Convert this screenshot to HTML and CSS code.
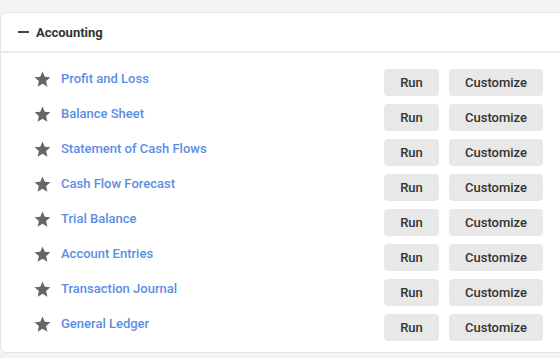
FILE: index.html
```html
<!DOCTYPE html>
<html lang="en">
<head>
    <meta charset="UTF-8">
    <meta name="viewport" content="width=device-width, initial-scale=1.0">
    <title>Reports - Accounting</title>
    <link rel="stylesheet" href="styles.css">
</head>
<body>
    <div class="panel">
        <div class="panel-header">
            <span class="collapse-icon"></span>
            <h2>Accounting</h2>
        </div>
        <ul class="report-list">
            <li class="report">
                <div class="report-name">
                    <svg class="star" viewBox="0 0 24 24"><path d="M12 17.27 18.18 21l-1.64-7.03L22 9.24l-7.19-.61L12 2 9.19 8.63 2 9.24l5.46 4.73L5.82 21z"/></svg>
                    <a href="#">Profit and Loss</a>
                </div>
                <div class="actions">
                    <button>Run</button>
                    <button class="wide">Customize</button>
                </div>
            </li>
            <li class="report">
                <div class="report-name">
                    <svg class="star" viewBox="0 0 24 24"><path d="M12 17.27 18.18 21l-1.64-7.03L22 9.24l-7.19-.61L12 2 9.19 8.63 2 9.24l5.46 4.73L5.82 21z"/></svg>
                    <a href="#">Balance Sheet</a>
                </div>
                <div class="actions">
                    <button>Run</button>
                    <button class="wide">Customize</button>
                </div>
            </li>
            <li class="report">
                <div class="report-name">
                    <svg class="star" viewBox="0 0 24 24"><path d="M12 17.27 18.18 21l-1.64-7.03L22 9.24l-7.19-.61L12 2 9.19 8.63 2 9.24l5.46 4.73L5.82 21z"/></svg>
                    <a href="#">Statement of Cash Flows</a>
                </div>
                <div class="actions">
                    <button>Run</button>
                    <button class="wide">Customize</button>
                </div>
            </li>
            <li class="report">
                <div class="report-name">
                    <svg class="star" viewBox="0 0 24 24"><path d="M12 17.27 18.18 21l-1.64-7.03L22 9.24l-7.19-.61L12 2 9.19 8.63 2 9.24l5.46 4.73L5.82 21z"/></svg>
                    <a href="#">Cash Flow Forecast</a>
                </div>
                <div class="actions">
                    <button>Run</button>
                    <button class="wide">Customize</button>
                </div>
            </li>
            <li class="report">
                <div class="report-name">
                    <svg class="star" viewBox="0 0 24 24"><path d="M12 17.27 18.18 21l-1.64-7.03L22 9.24l-7.19-.61L12 2 9.19 8.63 2 9.24l5.46 4.73L5.82 21z"/></svg>
                    <a href="#">Trial Balance</a>
                </div>
                <div class="actions">
                    <button>Run</button>
                    <button class="wide">Customize</button>
                </div>
            </li>
            <li class="report">
                <div class="report-name">
                    <svg class="star" viewBox="0 0 24 24"><path d="M12 17.27 18.18 21l-1.64-7.03L22 9.24l-7.19-.61L12 2 9.19 8.63 2 9.24l5.46 4.73L5.82 21z"/></svg>
                    <a href="#">Account Entries</a>
                </div>
                <div class="actions">
                    <button>Run</button>
                    <button class="wide">Customize</button>
                </div>
            </li>
            <li class="report">
                <div class="report-name">
                    <svg class="star" viewBox="0 0 24 24"><path d="M12 17.27 18.18 21l-1.64-7.03L22 9.24l-7.19-.61L12 2 9.19 8.63 2 9.24l5.46 4.73L5.82 21z"/></svg>
                    <a href="#">Transaction Journal</a>
                </div>
                <div class="actions">
                    <button>Run</button>
                    <button class="wide">Customize</button>
                </div>
            </li>
            <li class="report">
                <div class="report-name">
                    <svg class="star" viewBox="0 0 24 24"><path d="M12 17.27 18.18 21l-1.64-7.03L22 9.24l-7.19-.61L12 2 9.19 8.63 2 9.24l5.46 4.73L5.82 21z"/></svg>
                    <a href="#">General Ledger</a>
                </div>
                <div class="actions">
                    <button>Run</button>
                    <button class="wide">Customize</button>
                </div>
            </li>
        </ul>
    </div>
</body>
</html>
```

FILE: styles.css
```css
body {
    background-color: #f3f3f3;
    color: #333;
    font-family: Roboto, 'Liberation Sans', sans-serif;
    margin: 0;
    padding: 12px 0 0 0;
    overflow: hidden;
}

.panel {
    background-color: #fff;
    border: 1px solid #e4e4e4;
    border-radius: 6px;
    margin-right: -10px;
}

.panel-header {
    display: flex;
    align-items: center;
    height: 38px;
    padding-left: 17px;
    border-bottom: 2px solid #ececec;
}

.collapse-icon {
    width: 11px;
    height: 2px;
    background-color: #444;
    margin-right: 7px;
}

.panel-header h2 {
    margin: 0;
    font-size: 13px;
    font-weight: 700;
    color: #333;
}

.report-list {
    list-style: none;
    margin: 0;
    padding: 16px 26px 11px 32px;
    display: flex;
    flex-direction: column;
    gap: 8px;
}

.report {
    display: flex;
    justify-content: space-between;
    align-items: flex-start;
}

.report-name {
    display: flex;
    align-items: center;
    gap: 9px;
    height: 19px;
}

.star {
    width: 19px;
    height: 19px;
    fill: #666;
    margin-top: 1px;
}

.report-name a {
    color: #5a8ee6;
    text-decoration: none;
    font-size: 13px;
    font-weight: 500;
}

.actions {
    display: flex;
    gap: 10px;
}

.actions button {
    width: 55px;
    height: 27px;
    border: none;
    border-radius: 4px;
    background-color: #e8e8e8;
    color: #333;
    font-family: Roboto, 'Liberation Sans', sans-serif;
    font-size: 13px;
    font-weight: 500;
    cursor: pointer;
}

.actions button.wide {
    width: 94px;
}
```
